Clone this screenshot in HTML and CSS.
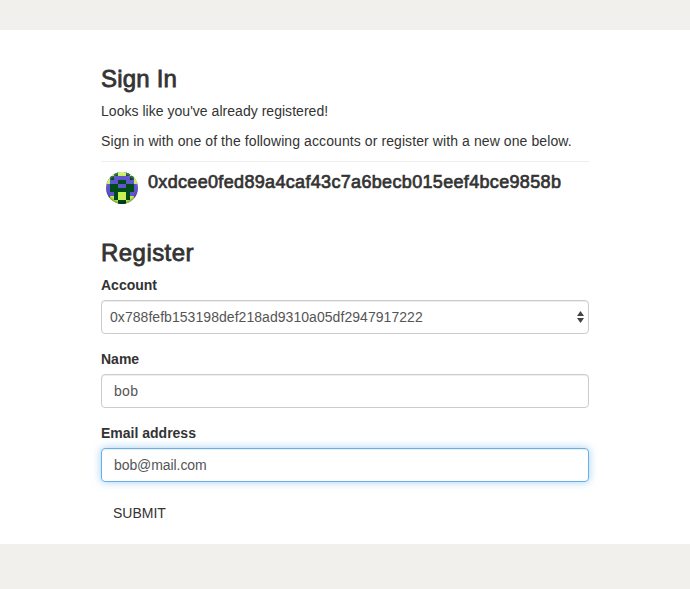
FILE: index.html
```html
<!DOCTYPE html>
<html lang="en">
<head>
<meta charset="utf-8">
<title>Sign In</title>
<link rel="stylesheet" href="styles.css">
</head>
<body>
<main class="panel">
  <section class="signin">
    <h1>Sign In</h1>
    <p class="notice">Looks like you've already registered!</p>
    <p>Sign in with one of the following accounts or register with a new one below.</p>
    <div class="account">
      <div class="avatar">
        <svg viewBox="0 0 8 8" shape-rendering="crispEdges">
          <rect width="8" height="8" fill="#6254cf"/>
          <path fill="#004b1a" d="M2 0h1v1H2zM5 0h1v1H5zM1 1h1v1H1zM6 1h1v1H6zM3 2h2v1H3zM1 3h2v1H1zM5 3h2v1H5zM1 4h6v1H1zM2 5h4v2H2zM3 7h2v1H3z"/>
          <path fill="#c6f153" d="M0 0h2v1H0zM6 0h2v1H6zM3 0h2v1H3zM0 1h1v2H0zM7 1h1v2H7zM3 5h2v2H3zM1 6h1v2H1zM6 6h1v2H6zM2 7h1v1H2zM5 7h1v1H5z"/>
        </svg>
      </div>
      <h2 class="address">0xdcee0fed89a4caf43c7a6becb015eef4bce9858b</h2>
    </div>
  </section>
  <form class="register">
    <h1 class="title">Register</h1>
    <div class="group">
      <label>Account</label>
      <div class="control select"><span class="value">0x788fefb153198def218ad9310a05df2947917222</span>
        <svg class="arrows" viewBox="0 0 7 12"><path d="M3.500 0 7 5H0zM0 7h7l-3.500 5z" fill="#444"/></svg>
      </div>
    </div>
    <div class="group">
      <label>Name</label>
      <div class="control name"><span class="value">bob</span></div>
    </div>
    <div class="group">
      <label>Email address</label>
      <div class="control focused"><span class="value">bob@mail.com</span></div>
    </div>
    <div class="submit">SUBMIT</div>
  </form>
</main>
</body>
</html>
```
FILE: styles.css
```css
* { box-sizing: border-box; }
body { margin: 0; padding: 30px 0 45px; background: #f2f0ec; color: #333; font: 14px/20px "Liberation Sans", Arial, sans-serif; }
.panel { height: 514px; padding: 35px 101px 0; background: #fff; }
h1 { margin: 0 0 9px; font-size: 24px; line-height: 27px; font-weight: 400; letter-spacing: .2px; -webkit-text-stroke: .8px #333; }
.title { letter-spacing: .45px; }
p { margin: 0 0 10px; white-space: nowrap; letter-spacing: .09px; }
.notice { letter-spacing: .03px; }
.account { display: flex; height: 48px; padding: 10px 5px 0; border-top: 1px solid #eee; }
.avatar { position: relative; width: 32px; height: 32px; border-radius: 50%; overflow: hidden; }
.avatar svg { display: block; width: 32px; height: 32px; }
.avatar::after { content: ""; position: absolute; inset: 0; border-radius: 50%; box-shadow: inset 0 -2px 2px rgba(0,0,0,.3), inset 0 2px 2px rgba(255,255,255,.3); }
.address { margin: 0 0 0 10px; font-size: 18px; line-height: 20px; font-weight: 400; letter-spacing: .33px; -webkit-text-stroke: .7px #333; }
.register { margin-top: 30px; }
.group { margin-bottom: 15px; }
label { display: block; margin-bottom: 5px; font-weight: 700; }
.control { display: flex; align-items: center; height: 34px; padding: 0 12px; border: 1px solid #ccc; border-radius: 4px; color: #555; box-shadow: inset 0 1px 1px rgba(0,0,0,.075); }
.select { justify-content: space-between; padding: 0 4px 0 8px; letter-spacing: .05px; }
.name { letter-spacing: .3px; }
.arrows { width: 7px; height: 12px; }
.focused { border-color: #66afe9; letter-spacing: -.08px; box-shadow: inset 0 1px 1px rgba(0,0,0,.075), 0 0 8px rgba(102,175,233,.6); }
.submit { padding: 6px 12px; }
```
